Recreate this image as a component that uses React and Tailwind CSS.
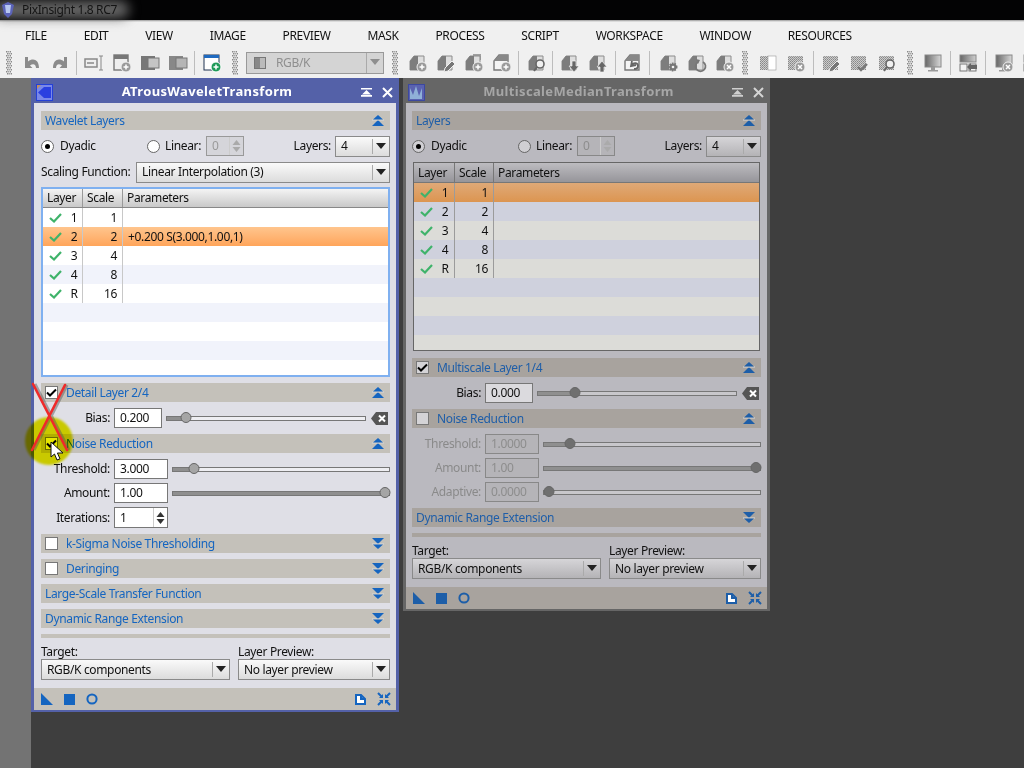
import React from "react";

const Grip = ({ cls = "" }) => (
  <svg width="6" height="24" viewBox="0 0 6 24" className={"shrink-0 " + cls}>
    {Array.from({ length: 12 }).map((_, i) => (
      <g key={i}>
        <rect x={i % 2 ? 1 : 0} y={i * 2} width="1.5" height="1.5" fill="#8a8a8a" />
        <rect x={i % 2 ? 3 : 2} y={i * 2} width="1.5" height="1.5" fill="#a5a5a5" />
        <rect x={i % 2 ? 5 : 4} y={i * 2} width="1" height="1.5" fill="#8a8a8a" />
      </g>
    ))}
  </svg>
);

const Sep = ({ cls = "" }) => <div className={"w-[1px] h-[24px] bg-[#bdbdbd] shrink-0 " + cls} />;

const Badge = ({ k }) => {
  const w = { stroke: "#fff", strokeWidth: 1.5, fill: "none" };
  return (
    <g>
      {k === "plus" && (
        <>
          <circle cx="14" cy="14" r="5" fill="#9a9a9a" stroke="#f0f0f0" />
          <path d="M11.5 14h5M14 11.5v5" {...w} />
        </>
      )}
      {k === "pen" && <path d="M8 19l1-4 7-7 3 3-7 7z" fill="#777" stroke="#f0f0f0" />}
      {k === "mag" && (
        <>
          <circle cx="13" cy="11" r="4" fill="#f0f0f0" stroke="#666" strokeWidth="1.6" />
          <path d="M10 14l-3 4" stroke="#666" strokeWidth="2" />
        </>
      )}
      {k === "down" && <path d="M12 8h4v5h3l-5 6-5-6h3z" fill="#666" stroke="#f0f0f0" strokeWidth=".7" />}
      {k === "up" && <path d="M12 19h4v-5h3l-5-6-5 6h3z" fill="#666" stroke="#f0f0f0" strokeWidth=".7" />}
      {k === "undo" && <path d="M9 8l-1 5 5-1M9 12c2-3 6-2 6 1s-2 3-4 3" fill="none" stroke="#666" strokeWidth="1.8" />}
      {k === "gear" && (
        <>
          <circle cx="14" cy="14" r="3.5" fill="#777" stroke="#777" strokeWidth="2" strokeDasharray="1.5 1" />
          <circle cx="14" cy="14" r="1.3" fill="#f0f0f0" />
        </>
      )}
      {k === "redo" && <path d="M16 9a5 5 0 1 1-5 0" fill="none" stroke="#777" strokeWidth="1.8" />}
      {k === "redo" && <path d="M9 6l4 1-2 4z" fill="#777" />}
      {k === "x" && (
        <>
          <circle cx="14" cy="14" r="5" fill="#9a9a9a" stroke="#f0f0f0" />
          <path d="M12 12l4 4M16 12l-4 4" {...w} />
        </>
      )}
      {k === "check" && <path d="M9 14l3 3 6-6" fill="none" stroke="#777" strokeWidth="2.4" />}
    </g>
  );
};

const Doc = ({ k, variant }) => (
  <svg width="20" height="20" viewBox="0 0 20 20">
    {variant === "double" && <path d="M9 1h8v6H9z" fill="#a0a0a0" />}
    {variant === "outline" ? (
      <>
        <path d="M7 2h9v15H2V8z" fill="#f4f4f4" stroke="#777" strokeWidth="1.4" />
        <path d="M7 2h9v6H2z" fill="#888" />
      </>
    ) : (
      <>
        <path d="M6 3h10v14H2V8z" fill="#dedede" stroke="#8c8c8c" />
        <path d="M6 3h4v14H2V8z" fill="#7d7d7d" />
      </>
    )}
    <Badge k={k} />
  </svg>
);

const Check = ({ k, half }) => (
  <svg width="20" height="20" viewBox="0 0 20 20">
    <defs>
      <pattern id="chk" width="2" height="2" patternUnits="userSpaceOnUse">
        <rect width="2" height="2" fill="#cccccc" />
        <rect width="1" height="1" fill="#888" />
        <rect x="1" y="1" width="1" height="1" fill="#999" />
      </pattern>
    </defs>
    <rect x="2" y="3" width={half ? 16 : 15} height="14" fill="url(#chk)" />
    {half && <rect x="10" y="3" width="8" height="14" fill="#fff" stroke="#999" strokeWidth=".6" />}
    {k && <Badge k={k} />}
  </svg>
);

const Monitor = ({ k }) => (
  <svg width="20" height="20" viewBox="0 0 20 20">
    <defs>
      <linearGradient id="mon" x1="0" x2="1" y1="0" y2="0">
        <stop offset="0" stopColor="#666" />
        <stop offset="1" stopColor="#d8d8d8" />
      </linearGradient>
    </defs>
    <rect x="2" y="2" width="16" height="12" fill="url(#mon)" stroke="#888" />
    <rect x="8" y="14" width="4" height="3" fill="#999" />
    <rect x="5" y="17" width="10" height="1.5" fill="#999" />
    {k && <Badge k={k} />}
  </svg>
);

const Split = ({ arrow }) => (
  <svg width="20" height="20" viewBox="0 0 20 20">
    <defs>
      <linearGradient id="spl" x1="0" x2="1" y1="0" y2="0">
        <stop offset="0" stopColor="#666" />
        <stop offset="1" stopColor="#cfcfcf" />
      </linearGradient>
    </defs>
    <rect x="2" y="2" width="16" height="7" fill="url(#spl)" stroke="#888" />
    <rect x="2" y="11" width="7" height="7" fill="#f4f4f4" stroke="#777" />
    <rect x="11" y="11" width="7" height="7" fill="#f4f4f4" stroke="#777" />
    {arrow && <path d="M19 12h-6v-2l-4 4 4 4v-2h6z" fill="#666" />}
  </svg>
);

const Arrow = ({ flip }) => (
  <svg width="18" height="16" viewBox="0 0 18 16" className={flip ? "-scale-x-100" : ""}>
    <path d="M5 2v4.5c5-4 11-2 11 6.5h-3c0-4-3-5-6-2.5L9.5 13H2V2z" fill="#8b8b8b" />
  </svg>
);

const Cell = ({ children }) => <div className="w-[28px] h-[24px] flex items-center justify-center shrink-0">{children}</div>;

const TriDown = ({ color }) => (
  <svg width="12" height="7" viewBox="0 0 12 7" className="shrink-0">
    <path d="M1 0h10L6 6z" fill={color} />
  </svg>
);

function Toolbar() {
  return (
    <div className="h-[27px] flex items-center pl-[6px] overflow-hidden shrink-0">
      <Grip />
      <div className="flex ml-[6px]">
        <Cell><Arrow /></Cell>
        <Cell><Arrow flip /></Cell>
      </div>
      <Sep cls="ml-[2px]" />
      <div className="flex ml-[3px]">
        <Cell>
          <svg width="20" height="16" viewBox="0 0 20 16">
            <rect x="1" y="4" width="12" height="8" fill="#eee" stroke="#888" strokeWidth="1.5" />
            <path d="M3 8h7" stroke="#888" strokeWidth="1.5" />
            <path d="M15 1h4M17 1v14M15 15h4" stroke="#888" />
          </svg>
        </Cell>
        <Cell>
          <svg width="20" height="20" viewBox="0 0 20 20">
            <rect x="2" y="2" width="14" height="15" fill="#eee" stroke="#777" strokeWidth="1.4" />
            <rect x="2" y="2" width="14" height="4" fill="#777" />
            <Badge k="plus" />
          </svg>
        </Cell>
        <Cell>
          <svg width="20" height="18" viewBox="0 0 20 18">
            <rect x="1" y="2" width="14" height="14" fill="#777" />
            <rect x="8" y="4" width="11" height="10" fill="#c5c5c5" stroke="#777" />
          </svg>
        </Cell>
        <Cell>
          <svg width="20" height="18" viewBox="0 0 20 18">
            <rect x="1" y="2" width="14" height="14" fill="#888" />
            <rect x="8" y="4" width="11" height="10" fill="#b5b5b5" stroke="#777" />
          </svg>
        </Cell>
      </div>
      <Sep cls="ml-[2px]" />
      <div className="ml-[3px]">
        <Cell>
          <svg width="20" height="20" viewBox="0 0 20 20">
            <rect x="2" y="2" width="15" height="15" fill="#fff" stroke="#1f3350" />
            <rect x="2" y="2" width="15" height="3" fill="#1f6ac0" />
            <circle cx="14" cy="14" r="5" fill="#1e9a58" stroke="#fff" />
            <path d="M11.5 14h5M14 11.5v5" stroke="#fff" strokeWidth="1.5" />
          </svg>
        </Cell>
      </div>
      <Grip cls="ml-[6px]" />
      <div className="ml-[8px] w-[138px] h-[22px] bg-[#d4d4d4] border border-[#999] flex items-center shrink-0">
        <svg width="12" height="12" viewBox="0 0 12 12" className="ml-[7px]">
          <rect width="12" height="12" fill="#888" />
          <rect x="6" width="6" height="12" fill="#bbb" />
          <rect x=".5" y=".5" width="11" height="11" fill="none" stroke="#777" />
        </svg>
        <span className="ml-[10px] text-[#8f8f8f]">RGB/K</span>
        <div className="ml-auto w-[17px] h-full flex items-center justify-center border-l border-[#aaa]">
          <TriDown color="#8e8e8e" />
        </div>
      </div>
      <Grip cls="ml-[8px]" />
      <div className="flex ml-[6px]">
        <Cell><Doc k="plus" /></Cell>
        <Cell><Doc k="pen" /></Cell>
        <Cell><Doc k="plus" variant="double" /></Cell>
        <Cell><Doc k="plus" variant="outline" /></Cell>
      </div>
      <Sep cls="ml-[2px]" />
      <div className="ml-[4px]"><Cell><Doc k="mag" /></Cell></div>
      <Sep cls="ml-[1px]" />
      <div className="flex ml-[3px]">
        <Cell><Doc k="down" /></Cell>
        <Cell><Doc k="up" /></Cell>
      </div>
      <Sep cls="ml-[3px]" />
      <div className="ml-[3px]"><Cell><Doc k="undo" variant="outline" /></Cell></div>
      <Sep cls="ml-[2px]" />
      <div className="flex ml-[5px]">
        <Cell><Doc k="gear" /></Cell>
        <Cell><Doc k="redo" /></Cell>
        <Cell><Doc k="x" /></Cell>
      </div>
      <Grip cls="ml-[3px]" />
      <div className="flex ml-[6px]">
        <Cell><Check half /></Cell>
        <Cell><Check k="x" /></Cell>
      </div>
      <Sep cls="ml-[3px]" />
      <div className="flex ml-[3px]">
        <Cell><Check k="pen" /></Cell>
        <Cell><Check k="check" /></Cell>
        <Cell><Check k="mag" /></Cell>
      </div>
      <Grip cls="ml-[6px]" />
      <div className="ml-[6px]"><Cell><Monitor /></Cell></div>
      <Sep cls="ml-[3px]" />
      <div className="ml-[3px]"><Cell><Split arrow /></Cell></div>
      <Sep cls="ml-[3px]" />
      <div className="flex ml-[4px]">
        <Cell><Monitor k="x" /></Cell>
        <Cell><Split /></Cell>
      </div>
    </div>
  );
}

const BLUE1 = "#1565c0";
const BLUE2 = "#1d5ea8";

const Chevrons = ({ up, color }) => (
  <svg width="12" height="11" viewBox="0 0 12 11" className={up ? "" : "rotate-180"}>
    <path d="M6 5L12 11H0z" fill={color} />
    <path d="M0 5h12" stroke="#d8d8d8" strokeWidth="1" />
    <path d="M6 0L11 4.5H1z" fill={color} />
  </svg>
);

const CheckBox = ({ on, dim }) => (
  <div className={"w-[13px] h-[13px] border border-[#777] flex items-center justify-center shrink-0 " + (dim ? "bg-[#d4d3d6]" : "bg-white")}>
    {on && (
      <svg width="11" height="9" viewBox="0 0 11 9">
        <path d="M1 4.5l3 3 6-6" fill="none" stroke="#000" strokeWidth="2" />
      </svg>
    )}
  </div>
);

function Bar({ title, up, box, on, dim, cls = "" }) {
  return (
    <div className={"h-[19px] flex items-center shrink-0 " + (dim ? "bg-[#a8a39e] text-[#1f5ea8] " : "bg-[#c4c1ba] text-[#1565c0] ") + cls}>
      {box ? (
        <div className="ml-[4px] mr-[8px]"><CheckBox on={on} dim={dim} /></div>
      ) : (
        <div className="w-[4px]" />
      )}
      <span>{title}</span>
      <div className="ml-auto mr-[6px] flex">
        <Chevrons up={up} color={dim ? BLUE2 : BLUE1} />
      </div>
    </div>
  );
}

function Radio({ on, dim }) {
  return (
    <div className={"w-[13px] h-[13px] rounded-full border border-[#666] flex items-center justify-center shrink-0 " + (dim ? "bg-[#d0cfd3]" : "bg-white")}>
      {on && <div className="w-[5px] h-[5px] rounded-full bg-black" />}
    </div>
  );
}

function Combo({ text, cls = "", dim }) {
  return (
    <div className={"h-[21px] border border-[#8a8a8a] flex items-center shrink-0 " + (dim ? "bg-gradient-to-b from-[#d6d5d8] to-[#b4b3b6] " : "bg-gradient-to-b from-[#fafafa] to-[#dcdcdc] ") + cls}>
      <span className="ml-[5px] text-[#111] whitespace-nowrap">{text}</span>
      <div className="ml-auto w-[17px] h-[15px] flex items-center justify-center border-l border-[#aaa] shrink-0">
        <TriDown color="#222" />
      </div>
    </div>
  );
}

function Spin({ text, disabled, dim, cls = "" }) {
  const arrow = disabled ? "#aaa" : "#333";
  return (
    <div
      className={
        "h-[20px] border flex items-center shrink-0 " +
        (disabled
          ? dim
            ? "bg-[#b5b4b8] border-[#888] text-[#8d8d8d] "
            : "bg-[#d5d5da] border-[#999] text-[#9a9a9a] "
          : "bg-white border-[#777] text-[#111] ") +
        cls
      }
    >
      <span className="ml-[5px]">{text}</span>
      <div className="ml-auto w-[14px] h-full flex flex-col items-center justify-center gap-[2px] border-l border-[#ccc]">
        <svg width="9" height="5" viewBox="0 0 9 5"><path d="M4.5 0l4 5h-8z" fill={arrow} /></svg>
        <svg width="9" height="5" viewBox="0 0 9 5"><path d="M4.5 5l4-5h-8z" fill={arrow} /></svg>
      </div>
    </div>
  );
}

function Slider({ pos, cls = "", dim }) {
  return (
    <div className={"relative h-[5px] border border-[#777] min-w-0 " + (dim ? "bg-[#c8c7cb] " : "bg-[#eeeef2] ") + cls}>
      <div className="h-full bg-[#8f8f8f]" style={{ width: pos }} />
      <div
        className={"absolute top-[-5px] w-[11px] h-[11px] rounded-full border border-[#666] -translate-x-1/2 " + (dim ? "bg-[#6f6f6f]" : "bg-[#a5a5a5]")}
        style={{ left: pos }}
      />
    </div>
  );
}

function ParamRow({ label, value, pos, labelDim, fieldDisabled, dim, cls = "", del, sliderCls = "", fieldW }) {
  return (
    <div className={"h-[20px] flex items-center shrink-0 " + cls}>
      <span className={"w-[69px] text-right shrink-0 whitespace-nowrap " + (labelDim ? "text-[#8a8a8a]" : "text-[#111]")}>{label}</span>
      <div
        className={
          "ml-[4px] h-[20px] border flex items-center shrink-0 " +
          fieldW +
          " " +
          (fieldDisabled
            ? "bg-[#b5b4b8] border-[#888] text-[#8d8d8d]"
            : dim
            ? "bg-[#dbdade] border-[#777] text-[#111]"
            : "bg-white border-[#777] text-[#111]")
        }
      >
        <span className="ml-[5px]">{value}</span>
      </div>
      <Slider pos={pos} cls={"flex-1 " + sliderCls} dim={dim} />
      {del && (
        <svg width="17" height="13" viewBox="0 0 17 13" className="ml-[5px] mr-[2px] shrink-0">
          <path d="M5 0h12v13H5L0 6.5z" fill="#555" />
          <path d="M8 3.5l6 6M14 3.5l-6 6" stroke="#fff" strokeWidth="2" />
        </svg>
      )}
    </div>
  );
}

const TICK = (
  <svg width="13" height="10" viewBox="0 0 13 10" className="shrink-0">
    <path d="M1 5l4 3.5L12 1" fill="none" stroke="#3fb36a" strokeWidth="2.2" />
  </svg>
);

function LayerTable({ selected, params, dim, cls = "", col1, col2, height, headH }) {
  const rows = [
    ["1", "1"],
    ["2", "2"],
    ["3", "4"],
    ["4", "8"],
    ["R", "16"],
    ["", ""],
    ["", ""],
    ["", ""],
    ["", ""],
  ];
  const sep = dim ? "border-[#9b9b9b]" : "border-[#c8c8c8]";
  return (
    <div className={"overflow-hidden shrink-0 " + height + " " + cls}>
      <div className={"flex items-center border-b " + headH + " " + (dim ? "bg-gradient-to-b from-[#bdbcc0] to-[#96959a] border-[#777]" : "bg-gradient-to-b from-[#f4f4f4] to-[#c9c9c9] border-[#888]")}>
        <div className={"h-full flex items-center pl-[4px] border-r " + col1 + " " + (dim ? "border-[#777]" : "border-[#999]")}>Layer</div>
        <div className={"h-full flex items-center pl-[4px] border-r " + col2 + " " + (dim ? "border-[#777]" : "border-[#999]")}>Scale</div>
        <div className="pl-[4px]">Parameters</div>
      </div>
      {rows.map((r, i) => {
        const sel = i === selected;
        const bg = sel
          ? dim
            ? "bg-gradient-to-b from-[#dfa977] to-[#dc9550]"
            : "bg-gradient-to-b from-[#ffc58d] to-[#ffa55a]"
          : i % 2
          ? dim
            ? "bg-[#cfd1dd]"
            : "bg-[#f1f3fb]"
          : dim
          ? "bg-[#dcdcd8]"
          : "bg-white";
        return (
          <div key={i} className={"h-[19px] flex items-center text-[#111] " + bg}>
            <div className={"h-full flex items-center border-r " + col1 + " " + (r[0] ? sep : "border-transparent")}>
              {r[0] && (
                <>
                  <div className="ml-[6px]">{TICK}</div>
                  <span className="ml-[6px] w-[12px] text-center">{r[0]}</span>
                </>
              )}
            </div>
            <div className={"h-full flex items-center justify-end pr-[5px] border-r " + col2 + " " + (r[0] ? sep : "border-transparent")}>{r[1]}</div>
            {i === 1 && params && <div className="pl-[5px]">{params}</div>}
          </div>
        );
      })}
    </div>
  );
}

function Footer({ dim }) {
  const c = dim ? BLUE2 : BLUE1;
  return (
    <div className={"h-[22px] flex items-center shrink-0 " + (dim ? "bg-[#a8a39e]" : "bg-[#c4c1ba]")}>
      <svg width="12" height="12" viewBox="0 0 12 12" className="ml-[7px]"><path d="M0 0l12 12H0z" fill={c} /></svg>
      <svg width="11" height="11" viewBox="0 0 11 11" className="ml-[11px]"><rect width="11" height="11" fill={c} /></svg>
      <svg width="12" height="12" viewBox="0 0 12 12" className="ml-[11px]"><circle cx="6" cy="6" r="4.6" fill="none" stroke={c} strokeWidth="2" /></svg>
      <svg width="11" height="11" viewBox="0 0 11 11" className="ml-auto"><path d="M1 1h5l4 4v5H1z" fill="#fff" stroke={c} strokeWidth="2" /><path d="M6 1v4h4" fill="none" stroke={c} strokeWidth="2" /></svg>
      <svg width="14" height="14" viewBox="0 0 14 14" className="ml-[11px] mr-[5px]">
        <path d="M1 1l4 4M13 1L9 5M1 13l4-4M13 13L9 9" stroke={c} strokeWidth="2" />
        <path d="M6 2v4H2zM8 2v4h4zM6 12V8H2zM8 12V8h4z" fill={c} />
      </svg>
    </div>
  );
}

function TitleBar({ title, dim }) {
  return (
    <div className={"h-[22px] flex items-center shrink-0 " + (dim ? "bg-[#666666]" : "bg-[#5461a8]")}>
      <div className={"ml-[2px] w-[17px] h-[17px] shrink-0 flex items-center justify-center border " + (dim ? "bg-[#6a6fb4] border-[#3c48a0]" : "bg-[#5a6fe0] border-[#2440d8]")}>
        {dim ? (
          <svg width="15" height="15" viewBox="0 0 15 15">
            <rect width="15" height="15" fill="#5a62b0" />
            <path d="M1 14V3l3 7 3-9 3 10 3-8v11z" fill="#8fb0d8" />
          </svg>
        ) : (
          <svg width="15" height="15" viewBox="0 0 15 15">
            <rect width="15" height="15" fill="#7a88e8" />
            <path d="M1 7.5L7 2h7v11H7z" fill="#2a40e0" />
            <path d="M0 0h4L0 4z" fill="#c09060" />
          </svg>
        )}
      </div>
      <div className={"flex-1 text-center font-bold text-[13px] tracking-[0.35px] " + (dim ? "text-[#a6a6a6]" : "text-white")}>{title}</div>
      <svg width="11" height="9" viewBox="0 0 11 9" className="shrink-0">
        <path d="M0 0h11v1.6H0zM5.5 2l4.5 4.5H1zM0 7h11v1.8H0z" fill={dim ? "#cfcfcf" : "#fff"} />
      </svg>
      <svg width="11" height="11" viewBox="0 0 11 11" className="ml-[10px] mr-[3px] shrink-0">
        <path d="M1 1l9 9M10 1l-9 9" stroke={dim ? "#d5d5d5" : "#fff"} strokeWidth="2" />
      </svg>
    </div>
  );
}

function LayerRadios({ dim }) {
  return (
    <div className="h-[20px] mt-[6px] flex items-center shrink-0">
      <Radio on dim={dim} />
      <span className="ml-[6px] w-[87px]">Dyadic</span>
      <Radio dim={dim} />
      <span className="ml-[5px]">Linear:</span>
      <Spin text="0" disabled dim={dim} cls="ml-[5px] w-[38px]" />
      <span className="ml-auto">Layers:</span>
      <Combo text="4" cls="ml-[4px] w-[55px]" dim={dim} />
    </div>
  );
}

function BottomBlock({ dim }) {
  return (
    <>
      <div className={"h-[4px] mt-[6px] shrink-0 " + (dim ? "bg-[#a8a39e]" : "bg-[#c4c1ba]")} />
      <div className="mt-[7px] flex gap-[8px] shrink-0">
        <div className="w-[189px]">
          <div className="h-[14px] leading-[14px]">Target:</div>
          <Combo text="RGB/K components" dim={dim} />
        </div>
        <div className="w-[152px]">
          <div className="h-[14px] leading-[14px]">Layer Preview:</div>
          <Combo text="No layer preview" dim={dim} />
        </div>
      </div>
    </>
  );
}

function Wavelet() {
  return (
    <div className="absolute left-[31px] top-0 w-[368px] h-[634px] border-[3px] border-t-0 border-b-[2px] border-[#5461a8] bg-[#dfdfe6] flex flex-col text-[#111]">
      <div className="pt-[3px] bg-[#5461a8]"><TitleBar title="ATrousWaveletTransform" /></div>
      <div className="flex-1 pt-[8px] pl-[7px] pr-[6px] flex flex-col">
        <Bar title="Wavelet Layers" up />
        <LayerRadios />
        <div className="h-[20px] mt-[6px] flex items-center shrink-0">
          <span className="w-[91px] whitespace-nowrap">Scaling Function:</span>
          <Combo text="Linear Interpolation (3)" cls="ml-[4px] flex-1" />
        </div>
        <div className="mt-[5px] border-2 border-[#7fb0f0] bg-white shrink-0">
          <LayerTable selected={1} params="+0.200 S(3.000,1.00,1)" col1="w-[40px]" col2="w-[40px]" height="h-[186px]" headH="h-[19px]" />
        </div>
        <Bar title="Detail Layer 2/4" up box on cls="mt-[6px]" />
        <ParamRow label="Bias:" value="0.200" pos="19px" cls="mt-[6px]" sliderCls="ml-[4px]" del fieldW="w-[48px]" />
        <Bar title="Noise Reduction" up box on cls="mt-[6px]" />
        <ParamRow label="Threshold:" value="3.000" pos="21px" cls="mt-[6px]" sliderCls="ml-[4px]" fieldW="w-[54px]" />
        <ParamRow label="Amount:" value="1.00" pos="212px" cls="mt-[4px]" sliderCls="ml-[4px]" fieldW="w-[54px]" />
        <div className="h-[21px] mt-[4px] flex items-center shrink-0">
          <span className="w-[69px] text-right">Iterations:</span>
          <Spin text="1" cls="ml-[4px] w-[54px] h-[21px]" />
        </div>
        <Bar title="k-Sigma Noise Thresholding" box cls="mt-[6px]" />
        <Bar title="Deringing" box cls="mt-[6px]" />
        <Bar title="Large-Scale Transfer Function" cls="mt-[6px]" />
        <Bar title="Dynamic Range Extension" cls="mt-[6px]" />
        <BottomBlock />
      </div>
      <Footer />
    </div>
  );
}

function Median() {
  return (
    <div className="absolute left-[403px] top-0 w-[367px] h-[533px] border-[3px] border-t-0 border-b-[2px] border-[#666666] bg-[#bab9bf] flex flex-col text-[#111]">
      <div className="pt-[3px] bg-[#666666]"><TitleBar title="MultiscaleMedianTransform" dim /></div>
      <div className="flex-1 pt-[8px] pl-[6px] pr-[6px] flex flex-col">
        <Bar title="Layers" up dim />
        <LayerRadios dim />
        <div className="mt-[6px] mx-[1px] border border-[#666] bg-[#dcdcd8] shrink-0">
          <LayerTable selected={0} dim col1="w-[41px]" col2="w-[39px]" height="h-[187px]" headH="h-[20px]" />
        </div>
        <Bar title="Multiscale Layer 1/4" up box on dim cls="mt-[7px]" />
        <ParamRow label="Bias:" value="0.000" pos="37px" dim cls="mt-[6px]" sliderCls="ml-[4px]" del fieldW="w-[48px]" />
        <Bar title="Noise Reduction" up box dim cls="mt-[6px]" />
        <ParamRow label="Threshold:" labelDim fieldDisabled value="1.0000" pos="26px" dim cls="mt-[6px]" sliderCls="ml-[4px]" fieldW="w-[54px]" />
        <ParamRow label="Amount:" labelDim fieldDisabled value="1.00" pos="212px" dim cls="mt-[4px]" sliderCls="ml-[4px]" fieldW="w-[54px]" />
        <ParamRow label="Adaptive:" labelDim fieldDisabled value="0.0000" pos="5px" dim cls="mt-[4px]" sliderCls="ml-[4px]" fieldW="w-[54px]" />
        <Bar title="Dynamic Range Extension" dim cls="mt-[6px]" />
        <BottomBlock dim />
      </div>
      <Footer dim />
    </div>
  );
}

export default function App() {
  return (
    <div className="w-[1024px] h-[768px] overflow-hidden flex flex-col bg-[#3e3e3e] text-[12px] tracking-[-0.35px] relative font-['Noto_Sans',sans-serif]">
      <div className="h-[20px] bg-[#030304] flex items-center relative shrink-0">
        <div className="absolute left-[-6px] top-[1px] w-[135px] h-[17px] rounded-full bg-[#6a6a6a] blur-[6px]" />
        <svg width="14" height="16" viewBox="0 0 14 16" className="relative ml-[1px]">
          <path d="M1 3l6-3 6 3-2 9-4 4-4-4z" fill="#5b63b8" />
          <path d="M4 3h6l-1 8H5z" fill="#b8c8f0" />
        </svg>
        <span className="relative ml-[7px] text-[#141414] text-[12px]">PixInsight 1.8 RC7</span>
      </div>
      <div className="h-[2px] bg-gradient-to-b from-[#9a9a9a] to-[#f0f0f0] shrink-0" />
      <div className="h-[56px] bg-[#f0f0f0] shrink-0 flex flex-col">
        <div className="h-[27px] flex items-center gap-[36.8px] pl-[25px] text-[#111]">
          {["FILE", "EDIT", "VIEW", "IMAGE", "PREVIEW", "MASK", "PROCESS", "SCRIPT", "WORKSPACE", "WINDOW", "RESOURCES"].map((m) => (
            <span key={m}>{m}</span>
          ))}
        </div>
        <Toolbar />
      </div>
      <div className="flex-1 relative">
        <div className="absolute left-0 top-0 bottom-0 w-[31px] bg-[#737373]" />
        <Wavelet />
        <Median />
      </div>
      <div className="absolute left-[25px] top-[417px] w-[48px] h-[48px] rounded-full bg-[#e6e600] mix-blend-multiply blur-[1px]" />
      <svg width="44" height="76" viewBox="0 0 44 76" className="absolute left-[28px] top-[380px]">
        <path d="M5 4l34 66M37 5L4 70" stroke="#555" strokeWidth="3" opacity=".45" transform="translate(2 0)" />
        <path d="M5 4l34 66M37 5L4 70" stroke="#ef2a2a" strokeWidth="2.6" strokeLinecap="round" />
      </svg>
      <svg width="15" height="21" viewBox="0 0 15 21" className="absolute left-[50px] top-[441px]">
        <path d="M1 1v15l3.5-3 2.5 6 3-1.2-2.6-5.8H13z" fill="#fff" stroke="#111" strokeWidth="1" />
      </svg>
    </div>
  );
}
